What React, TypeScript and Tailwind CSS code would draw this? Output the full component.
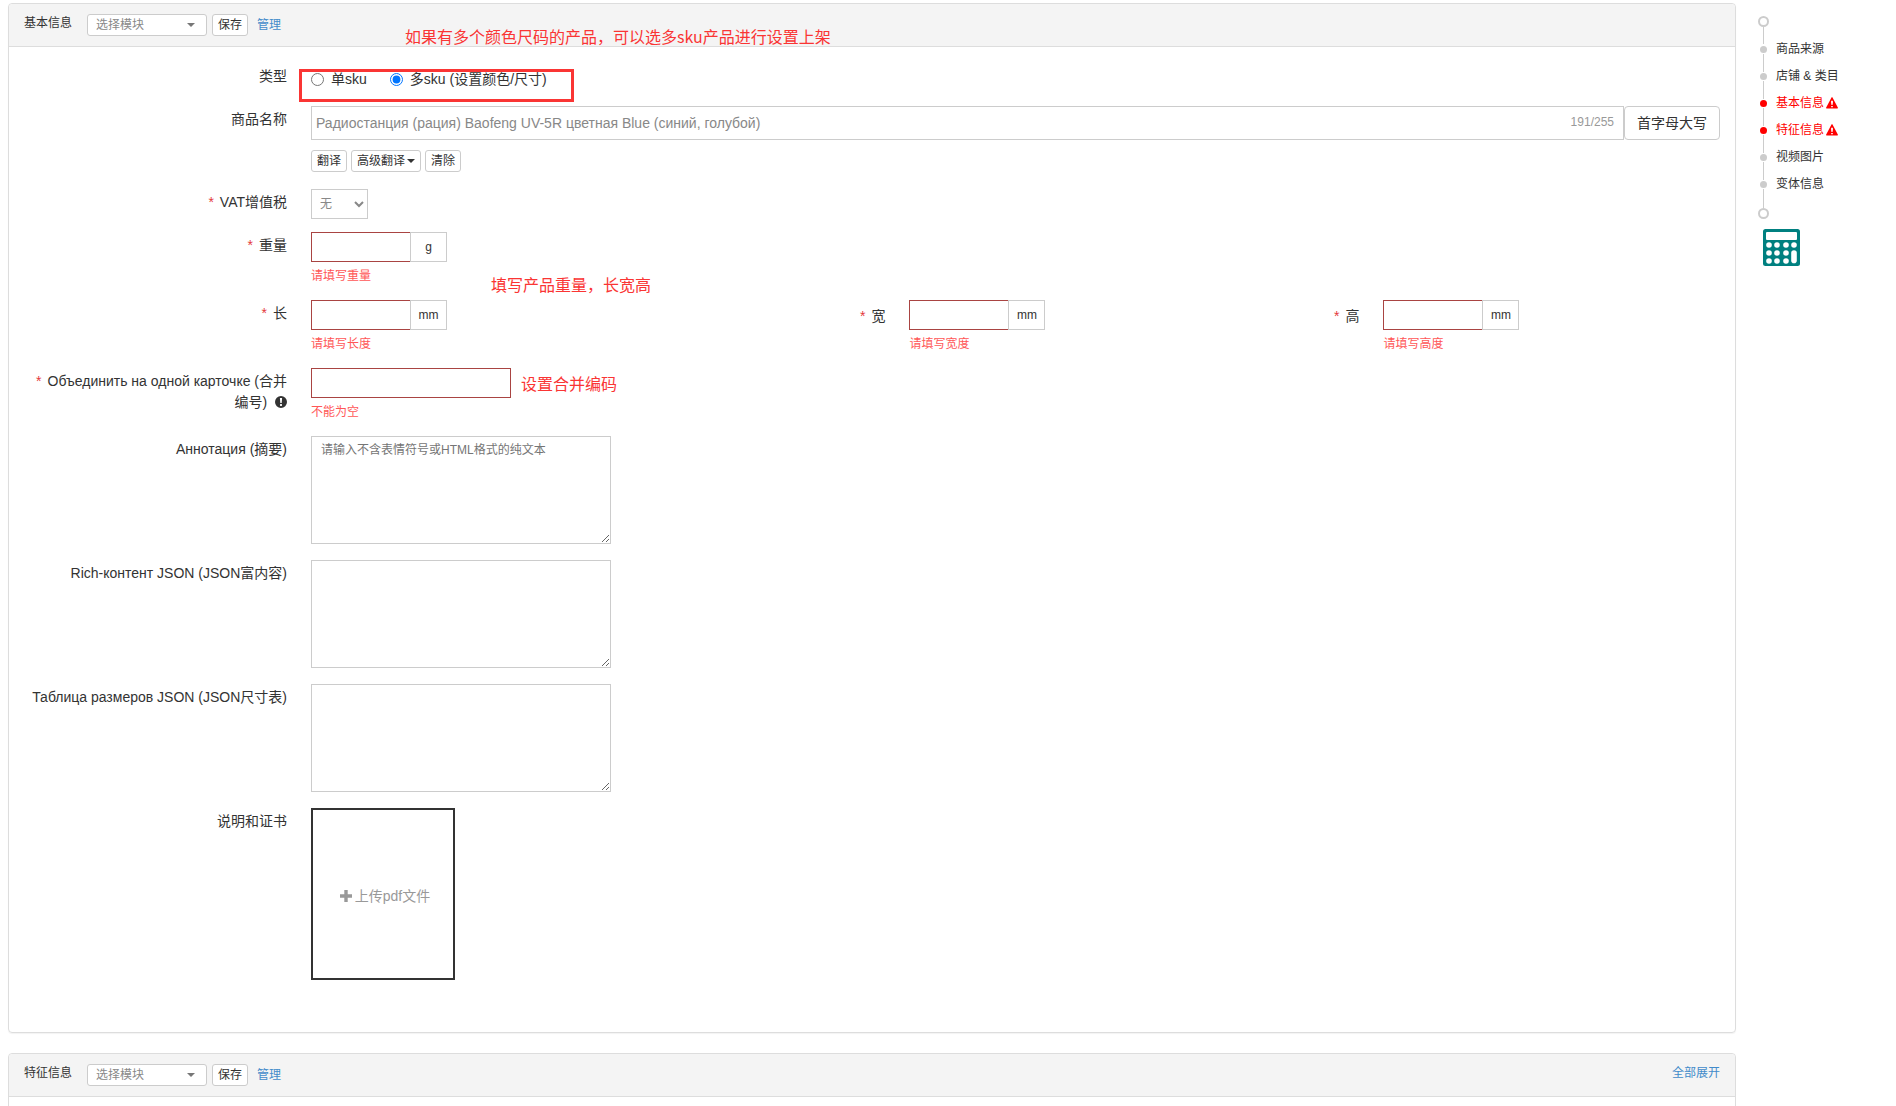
import type { ReactNode } from 'react';

const annotation = "pointer-events-none absolute whitespace-nowrap text-base leading-6 text-[#fa3534] font-['Noto_Sans_CJK_SC',sans-serif]";
const smallButton = 'flex h-[22px] items-center rounded-[3px] border border-[#ccc] bg-white px-[5px] text-xs text-[#333]';

function Caret({ className }: { className: string }) {
  return (
    <svg viewBox="0 0 8 4" className={className} fill="currentColor" aria-hidden="true">
      <path d="M0 0h8L4 4z" />
    </svg>
  );
}

function WarningIcon() {
  return (
    <svg viewBox="0 0 12 12" className="size-3" fill="currentColor" aria-hidden="true">
      <path
        fillRule="evenodd"
        d="M5.5.4a.6.6 0 0 1 1 0l5.3 10.2a.6.6 0 0 1-.5.9H.7a.6.6 0 0 1-.5-.9zM5.1 3.8v2l.4 2.3h1l.4-2.3v-2zM5.2 9v1.3h1.6V9z"
      />
    </svg>
  );
}

function InfoIcon() {
  return (
    <svg viewBox="0 0 12 12" className="ml-1 inline size-3 align-[-1px]" fill="currentColor" aria-hidden="true">
      <path
        fillRule="evenodd"
        d="M6 0a6 6 0 1 1 0 12A6 6 0 0 1 6 0zM4.9 2l.4 5h1.4l.4-5zM5.1 8v2h1.8V8z"
      />
    </svg>
  );
}

function CalculatorIcon() {
  const keys = [
    [6, 16], [14, 16], [23, 16], [31, 16],
    [6, 24], [14, 24], [23, 24],
    [6, 32], [14, 32], [23, 32],
  ];
  return (
    <svg viewBox="0 0 37 37" className="size-[37px]" aria-hidden="true">
      <rect width="37" height="37" rx="2.5" fill="#008080" />
      <rect x="3" y="3" width="31" height="8" rx="1" fill="#fff" />
      {keys.map(([x, y]) => (
        <circle key={`${x}-${y}`} cx={x} cy={y} r="2.8" fill="#fff" />
      ))}
      <rect x="28.2" y="21.2" width="5.6" height="13" rx="2.8" fill="#fff" />
    </svg>
  );
}

function PanelHeader({ title, id, children }: { title: string; id: string; children?: ReactNode }) {
  return (
    <header className="flex h-[43px] items-start rounded-t border-b border-[#ddd] bg-[#f4f4f4] px-[15px] pt-[10px] text-xs">
      <h2 className="leading-[18px] text-[#333]">{title}</h2>
      <div className="relative ml-[15px]">
        <select
          id={id}
          aria-label="选择模块"
          className="h-[22px] w-[120px] appearance-none rounded-[3px] border border-[#ccc] bg-white px-2 text-xs text-[#888]"
        >
          <option>选择模块</option>
        </select>
        <Caret className="pointer-events-none absolute top-[9px] right-3 h-1 w-2 text-[#777]" />
      </div>
      <button type="button" className={smallButton + ' ml-[5px]'}>保存</button>
      <a href="#manage" className="ml-[9px] leading-[22px] text-[#428bca]">管理</a>
      {children}
    </header>
  );
}

function Row({ label, htmlFor, required, children }: { label: ReactNode; htmlFor?: string; required?: boolean; children: ReactNode }) {
  return (
    <div className="flex items-start gap-6">
      <label htmlFor={htmlFor} className="w-[263px] shrink-0 pt-[3px] pl-1 text-right text-sm leading-[21px] text-[#333]">
        {required && <span className="mr-[6px] text-[#e4393c]">*</span>}
        {label}
      </label>
      <div className="min-w-0 flex-1">{children}</div>
    </div>
  );
}

function ErrorText({ children }: { children: ReactNode }) {
  return <p className="mt-1 h-5 text-xs leading-5 text-[#ff5757]">{children}</p>;
}

function Measure({ id, unit, error, label }: { id: string; unit: string; error: string; label?: string }) {
  return (
    <div className="flex gap-6">
      {label && (
        <label htmlFor={id} className="pt-[6px] text-sm leading-[21px] text-[#333]">
          <span className="mr-[6px] text-[#e4393c]">*</span>
          {label}
        </label>
      )}
      <div>
        <div className="flex h-[30px]">
          <input id={id} type="text" className="w-[99px] border border-r-0 border-[#a94442] bg-white px-2 text-sm" />
          <span className="flex w-[37px] items-center justify-center border border-[#ccc] text-xs text-[#333]">{unit}</span>
        </div>
        <ErrorText>{error}</ErrorText>
      </div>
    </div>
  );
}

function TextBlock({ id, label, placeholder }: { id: string; label: string; placeholder?: string }) {
  return (
    <Row label={label} htmlFor={id}>
      <textarea
        id={id}
        placeholder={placeholder}
        className="block h-[108px] w-[300px] resize border border-[#ccc] px-[9px] py-1 text-xs leading-[18px] placeholder:text-[#757575]"
      />
    </Row>
  );
}

const steps = [
  { label: '商品来源' },
  { label: '店铺 & 类目' },
  { label: '基本信息', error: true },
  { label: '特征信息', error: true },
  { label: '视频图片' },
  { label: '变体信息' },
];

function StepNav() {
  return (
    <nav className="w-40 shrink-0 pt-4 pl-[22px] text-xs text-[#333]">
      <div className="flex w-[11px] flex-col items-center">
        <span className="size-[11px] rounded-full border-2 border-[#ccc]" />
        <span className="h-[17px] w-px bg-[#ccc]" />
      </div>
      <ul className="pt-px">
        {steps.map((step) => (
          <li key={step.label} className="flex h-[27px] gap-[7px]">
            <span className="flex w-[11px] flex-col items-center gap-px pt-px">
              <span className={step.error ? 'size-[7px] shrink-0 rounded-full bg-[#f00]' : 'size-[7px] shrink-0 rounded-full bg-[#ccc]'} />
              <span className="w-px flex-1 bg-[#ccc]" />
            </span>
            <a
              href="#step"
              className={step.error ? '-mt-1 flex h-4 items-center gap-[2px] leading-4 text-[#f00]' : '-mt-1 flex h-4 items-center leading-4'}
            >
              {step.label}
              {step.error && <WarningIcon />}
            </a>
          </li>
        ))}
      </ul>
      <div className="flex w-[11px] flex-col items-center">
        <span className="h-px w-px bg-[#ccc]" />
        <span className="size-[11px] rounded-full border-2 border-[#ccc]" />
      </div>
      <button type="button" aria-label="计算器" className="mt-[10px] ml-[5px] block">
        <CalculatorIcon />
      </button>
    </nav>
  );
}

export default function App() {
  return (
    <div lang="zh-CN" className="flex h-screen overflow-hidden bg-white pl-2 font-['Liberation_Sans','Noto_Sans_CJK_SC',sans-serif]">
      <main className="min-w-0 flex-1 pt-[3px]">
        <section className="relative rounded border border-[#ddd] shadow-[0_1px_1px_rgba(0,0,0,0.05)]">
          <PanelHeader title="基本信息" id="base-template" />
          <p className={annotation + ' top-5 left-[396px]'}>如果有多个颜色尺码的产品，可以选多sku产品进行设置上架</p>

          <form className="pt-4 pr-[15px] pb-[52px] pl-[15px]">
            <Row label="类型">
              <div className="flex h-[43px] items-start gap-[23px] pt-[6px] text-sm leading-5 text-[#333]">
                <label className="flex items-center gap-[7px]">
                  <input type="radio" name="kind" className="size-[13px]" />
                  单sku
                </label>
                <label className="flex items-center gap-[7px]">
                  <input type="radio" name="kind" defaultChecked className="size-[13px]" />
                  多sku (设置颜色/尺寸)
                </label>
              </div>
            </Row>
            <div className="pointer-events-none absolute top-[65px] left-[290px] h-[33px] w-[275px] border-3 border-[#fa3534]" />

            <Row label="商品名称" htmlFor="name">
              <div className="flex h-[34px]">
                <div className="relative flex-1">
                  <input
                    id="name"
                    type="text"
                    defaultValue="Радиостанция (рация) Baofeng UV-5R цветная Blue (синий, голубой)"
                    className="h-full w-full border border-[#ccc] pr-16 pl-1 text-sm text-[#888]"
                  />
                  <span className="absolute top-2 right-[10px] text-xs leading-4 text-[#999]">191/255</span>
                </div>
                <button type="button" className="w-24 rounded border border-[#ccc] bg-white text-sm text-[#333]">首字母大写</button>
              </div>
              <div className="mt-[10px] mb-[17px] flex gap-1">
                <button type="button" className={smallButton}>翻译</button>
                <button type="button" className={smallButton + ' gap-[2px]'}>
                  高级翻译
                  <Caret className="h-1 w-2" />
                </button>
                <button type="button" className={smallButton}>清除</button>
              </div>
            </Row>

            <Row label="VAT增值税" htmlFor="vat" required>
              <select id="vat" className="mb-[13px] block h-[30px] w-[57px] border border-[#ccc] bg-white px-1 text-xs text-[#888]">
                <option>无</option>
              </select>
            </Row>

            <div className="space-y-[14px]">
              <Row label="重量" htmlFor="weight" required>
                <Measure id="weight" unit="g" error="请填写重量" />
              </Row>
              <p className={annotation + ' top-[268px] left-[482px]'}>填写产品重量，长宽高</p>

              <Row label="长" htmlFor="length" required>
                <div className="grid grid-cols-[549fr_474fr_386fr]">
                  <Measure id="length" unit="mm" error="请填写长度" />
                  <Measure id="width" unit="mm" error="请填写宽度" label="宽" />
                  <Measure id="height" unit="mm" error="请填写高度" label="高" />
                </div>
              </Row>

              <Row
                htmlFor="merge"
                required
                label={<>Объединить на одной карточке (合并编号) <InfoIcon /></>}
              >
                <input id="merge" type="text" className="block h-[30px] w-[200px] border border-[#a94442] px-2 text-sm" />
                <ErrorText>不能为空</ErrorText>
              </Row>
              <p className={annotation + ' top-[367px] left-[512px]'}>设置合并编码</p>
            </div>

            <div className="mt-[14px] space-y-4">
              <TextBlock id="annotation" label="Аннотация (摘要)" placeholder="请输入不含表情符号或HTML格式的纯文本" />
              <TextBlock id="rich" label="Rich-контент JSON (JSON富内容)" />
              <TextBlock id="sizes" label="Таблица размеров JSON (JSON尺寸表)" />
              <Row label="说明和证书" htmlFor="upload">
                <button
                  id="upload"
                  type="button"
                  className="flex h-[172px] w-36 items-center justify-center gap-[3px] border-2 border-[#333] pt-1 pl-1 text-sm text-[#999]"
                >
                  <svg viewBox="0 0 12 12" className="size-3" fill="currentColor" aria-hidden="true">
                    <path d="M4.3 0h3.4v4.3H12v3.4H7.7V12H4.3V7.7H0V4.3h4.3z" />
                  </svg>
                  上传pdf文件
                </button>
              </Row>
            </div>
          </form>
        </section>

        <section className="mt-5 h-24 rounded border border-[#ddd]">
          <PanelHeader title="特征信息" id="feature-template">
            <a href="#expand" className="ml-auto leading-[18px] text-[#428bca]">全部展开</a>
          </PanelHeader>
        </section>
      </main>
      <StepNav />
    </div>
  );
}
